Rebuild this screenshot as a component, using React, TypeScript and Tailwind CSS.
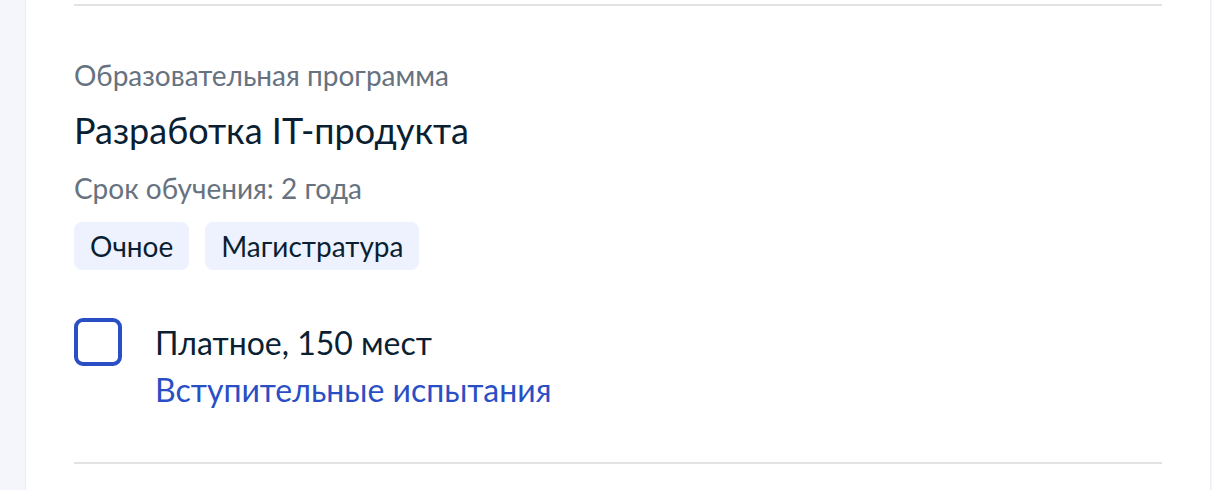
export default function App() {
  return (
    <div
      className="flex h-[490px] w-[1212px] bg-[#f5f6fb] pl-[25px] pr-[1px]"
      style={{ fontFamily: "Lato, 'Noto Sans', sans-serif" }}
    >
      <div className="flex flex-1 flex-col border-x border-[#eceef5] bg-white px-[48px]">
        <div className="mt-[4px] h-[2px] bg-[#e3e3e3]" />

        <div className="flex flex-col pt-[51px]">
          <p className="text-[28px] leading-[36px] text-[#66727f]">Образовательная программа</p>
          <h3 className="mt-[15px] text-[36px] leading-[44px] text-[#0b1f33]">Разработка IT-продукта</h3>
          <p className="mt-[18px] text-[28px] leading-[36px] text-[#66727f]">Срок обучения: 2 года</p>

          <div className="mt-[16px] flex gap-[16px]">
            <span className="flex h-[48px] items-center rounded-[8px] bg-[#edf2fe] px-[16px] text-[28px] text-[#0b1f33]">
              Очное
            </span>
            <span className="flex h-[48px] items-center rounded-[8px] bg-[#edf2fe] px-[16px] text-[28px] text-[#0b1f33]">
              Магистратура
            </span>
          </div>

          <div className="mt-[48px] flex gap-[33px]">
            <div className="h-[48px] w-[48px] shrink-0 rounded-[9px] border-[4px] border-[#2a4fc5]" />
            <div className="flex flex-col pt-[5px]">
              <span className="text-[32px] leading-[40px] text-[#0b1f33]">Платное, 150 мест</span>
              <a className="mt-[7px] text-[32px] leading-[40px] text-[#2a4fc5]">Вступительные испытания</a>
            </div>
          </div>
        </div>

        <div className="mt-auto mb-[26px] h-[2px] bg-[#e3e3e3]" />
      </div>
    </div>
  );
}
